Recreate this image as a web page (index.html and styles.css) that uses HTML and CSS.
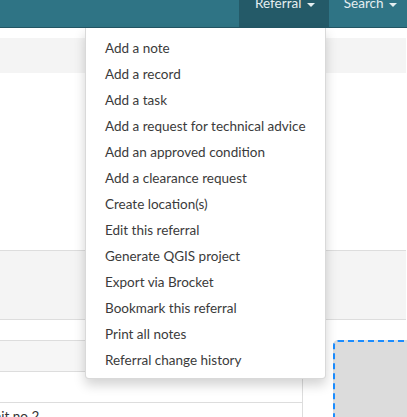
FILE: index.html
```html
<!DOCTYPE html>
<html>
<head>
<meta charset="utf-8">
<link rel="stylesheet" href="styles.css">
</head>
<body>
<nav class="topbar">
  <a class="nav-item active">Referral <span class="caret"></span></a>
  <a class="nav-item last">Search <span class="caret"></span></a>
</nav>
<ul class="dropdown">
  <li>Add a note</li>
  <li>Add a record</li>
  <li>Add a task</li>
  <li>Add a request for technical advice</li>
  <li>Add an approved condition</li>
  <li>Add a clearance request</li>
  <li>Create location(s)</li>
  <li>Edit this referral</li>
  <li>Generate QGIS project</li>
  <li>Export via Brocket</li>
  <li>Bookmark this referral</li>
  <li>Print all notes</li>
  <li>Referral change history</li>
</ul>
<main class="page">
  <div class="band"></div>
  <div class="panel"></div>
  <div class="lower">
    <div class="table">
      <div class="row"></div>
      <div class="row striped"></div>
      <div class="row"></div>
      <div class="row text-row"><span class="cell">Unit no 2</span></div>
    </div>
    <div class="dropzone"></div>
  </div>
</main>
</body>
</html>
```
FILE: styles.css
```css
html, body {
  margin: 0;
  padding: 0;
  background: #fff;
  font-family: "Lato", "Liberation Sans", sans-serif;
  color: #333;
  overflow: hidden;
}
.topbar {
  height: 27px;
  background: #2f7485;
  border-bottom: 1px solid #235664;
  display: flex;
  justify-content: flex-end;
  align-items: flex-end;
  overflow: hidden;
}
.nav-item {
  display: block;
  color: #e4eef0;
  font-size: 13.5px;
  line-height: 20px;
  padding: 0 10px 14px 15px;
  white-space: nowrap;
}
.nav-item.active {
  background: #245a68;
  padding: 0 14px 14px 16px;
}
.caret {
  display: inline-block;
  width: 0;
  height: 0;
  margin-left: 2px;
  vertical-align: middle;
  border-top: 4px solid #e4eef0;
  border-left: 4px solid transparent;
  border-right: 4px solid transparent;
}
.dropdown {
  position: absolute;
  top: 28px;
  left: 85px;
  width: 239px;
  margin: 0;
  padding: 7px 0 5px;
  list-style: none;
  background: #fff;
  border: 1px solid rgba(0,0,0,0.15);
  border-top: none;
  border-radius: 0 0 4px 4px;
  box-shadow: 0 6px 12px rgba(0,0,0,0.175);
  z-index: 10;
}
.dropdown li {
  padding: 3px 19px;
  font-size: 13.5px;
  line-height: 20px;
  color: #3b3b3b;
  white-space: nowrap;
}
.page {
  padding-top: 10px;
}
.band {
  height: 35px;
  margin-right: 1px;
  background: #f4f4f4;
}
.panel {
  margin-top: 177px;
  height: 68px;
  margin-right: 1px;
  background: #f4f4f4;
  border-top: 1px solid #dddddd;
  border-bottom: 1px solid #dddddd;
}
.lower {
  display: flex;
  align-items: flex-start;
}
.table {
  margin-left: -20px;
  padding-left: 20px;
  width: 302px;
  border-right: 1px solid #dddddd;
  flex: none;
}
.row {
  height: 30px;
  border-bottom: 1px solid #dddddd;
}
.row:first-child {
  height: 20px;
}
.row.striped {
  background: #f6f6f6;
}
.text-row {
  border-bottom: none;
  padding-top: 3px;
}
.cell {
  display: block;
  margin-left: -16px;
  font-size: 13.5px;
  line-height: 20px;
  color: #333;
}
.dropzone {
  margin-left: 30px;
  margin-top: 20px;
  flex: 1;
  margin-right: -10px;
  height: 120px;
  background: #dcdcdc;
  border: 2px dashed #1a8cff;
  border-radius: 5px;
}
```
